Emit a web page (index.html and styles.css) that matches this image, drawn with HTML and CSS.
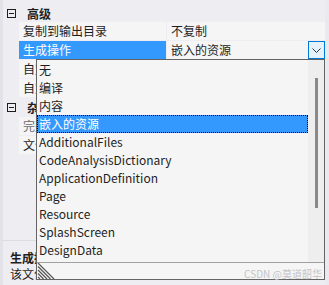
FILE: index.html
```html
<!DOCTYPE html>
<html lang="zh-CN">
<head>
    <meta charset="UTF-8">
    <title>属性</title>
    <link rel="stylesheet" href="styles.css">
</head>
<body>

    <div class="pane">
        <div class="props">
            <div class="cat cat-first">
                <span class="toggle"></span>
                <span class="cat-name">高级</span>
            </div>
            <div class="row">
                <span class="name">复制到输出目录</span>
                <span class="value">不复制</span>
            </div>
            <div class="row selected">
                <span class="name">生成操作</span>
                <span class="value">嵌入的资源
                    <span class="drop-btn">
                        <svg width="9" height="5" viewBox="0 0 9 5"><path d="M0.5 0.5 L4.5 4.5 L8.5 0.5" fill="none" stroke="#333" stroke-width="1"/></svg>
                    </span>
                </span>
            </div>
            <div class="row">
                <span class="name">自定义工具</span>
                <span class="value"></span>
            </div>
            <div class="row">
                <span class="name">自定义工具命名空间</span>
                <span class="value"></span>
            </div>
            <div class="cat">
                <span class="toggle"></span>
                <span class="cat-name">杂项</span>
            </div>
            <div class="row readonly">
                <span class="name">完整路径</span>
                <span class="value">C:\App\data.xml</span>
            </div>
            <div class="row">
                <span class="name">文件名</span>
                <span class="value">data.xml</span>
            </div>
        </div>

        <div class="desc">
            <div class="desc-title">生成操作</div>
            <div class="desc-text">该文件与生成和部署进程的关系。</div>
        </div>

        <div class="dropdown">
            <div class="drop-body">
                <ul class="options">
                    <li>无</li>
                    <li>编译</li>
                    <li>内容</li>
                    <li class="current">嵌入的资源</li>
                    <li>AdditionalFiles</li>
                    <li>CodeAnalysisDictionary</li>
                    <li>ApplicationDefinition</li>
                    <li>Page</li>
                    <li>Resource</li>
                    <li>SplashScreen</li>
                    <li>DesignData</li>
                </ul>
                <div class="scrollbar"><div class="thumb"></div></div>
            </div>
            <div class="grip">
                <svg width="18" height="16" viewBox="0 0 18 16">
                    <g stroke="#555" stroke-width="1.2">
                        <line x1="1" y1="0" x2="17" y2="16"/>
                        <line x1="1" y1="3.5" x2="13.5" y2="16"/>
                        <line x1="1" y1="7" x2="10" y2="16"/>
                        <line x1="1" y1="10.5" x2="6.5" y2="16"/>
                        <line x1="1" y1="14" x2="3" y2="16"/>
                    </g>
                </svg>
            </div>
        </div>

        <div class="watermark">CSDN @莫道韶华</div>
    </div>

</body>
</html>
```

FILE: styles.css
```css
body {
    margin: 0;
    padding: 0;
    background-color: #e9e9ef;
    font-family: 'Noto Sans CJK SC', 'Noto Sans', sans-serif;
    font-size: 12px;
    color: #1e1e1e;
}

.pane {
    position: relative;
    width: 322px;
    height: 285px;
    border-left: 3px solid #e2e2e8;
    background-color: #eeeef2;
    overflow: hidden;
}

.props {
    height: 240px;
    border-bottom: 1px solid #dcdce2;
    display: flex;
    flex-direction: column;
    gap: 1px;
}

.cat {
    height: 18px;
    display: flex;
    align-items: center;
    font-weight: bold;
}

.cat-first {
    height: 21px;
    padding-top: 5px;
    box-sizing: border-box;
}

.toggle {
    width: 7px;
    height: 7px;
    border: 1px solid #1e1e1e;
    margin-left: 4px;
    margin-right: 11px;
    position: relative;
}

.toggle::after {
    content: '';
    position: absolute;
    left: 1px;
    right: 1px;
    top: 3px;
    height: 1px;
    background-color: #1e1e1e;
}

.row {
    height: 18px;
    margin-left: 16px;
    display: flex;
    line-height: 18px;
}

.name {
    width: 143px;
    padding-left: 4px;
    background-color: #f5f5f5;
    white-space: nowrap;
    overflow: hidden;
}

.value {
    flex: 1;
    margin-left: 1px;
    padding-left: 4px;
    background-color: #f5f5f5;
    white-space: nowrap;
    overflow: hidden;
    position: relative;
}

.selected .name {
    background-color: #3399ff;
    color: #fff;
}

.readonly {
    color: #6d6d6d;
}

.drop-btn {
    position: absolute;
    right: 0;
    top: 0;
    width: 15px;
    height: 16px;
    border: 1px solid #0078d7;
    background-color: #e5f1fb;
    display: flex;
    align-items: center;
    justify-content: center;
}

.desc {
    padding: 9px 7px 0;
}

.desc-title {
    font-weight: bold;
    line-height: 16px;
}

.desc-text {
    line-height: 16px;
}

.dropdown {
    position: absolute;
    left: 33px;
    top: 59px;
    width: 287px;
    height: 219px;
    border: 1px solid #646464;
    background-color: #f5f5f5;
    display: flex;
    flex-direction: column;
}

.drop-body {
    flex: 1;
    display: flex;
}

.options {
    list-style: none;
    margin: 0;
    padding: 1px 0 0;
    flex: 1;
}

.options li {
    height: 18px;
    line-height: 18px;
    padding-left: 2px;
    white-space: nowrap;
    overflow: hidden;
    box-sizing: border-box;
}

.options li.current {
    background-color: #3399ff;
    color: #fff;
    border: 1px dotted #000;
    padding-left: 1px;
    line-height: 16px;
}

.scrollbar {
    width: 16px;
    background-color: #eeeeee;
    position: relative;
}

.thumb {
    position: absolute;
    left: 7px;
    top: 18px;
    width: 3px;
    height: 130px;
    background-color: #888;
}

.grip {
    height: 16px;
    border-top: 1px solid #a0a0a0;
    display: flex;
    align-items: flex-end;
}

.grip svg {
    display: block;
}

.watermark {
    position: absolute;
    right: 3px;
    bottom: 5px;
    color: #c4c4c8;
    font-size: 10px;
    line-height: 12px;
}
```
